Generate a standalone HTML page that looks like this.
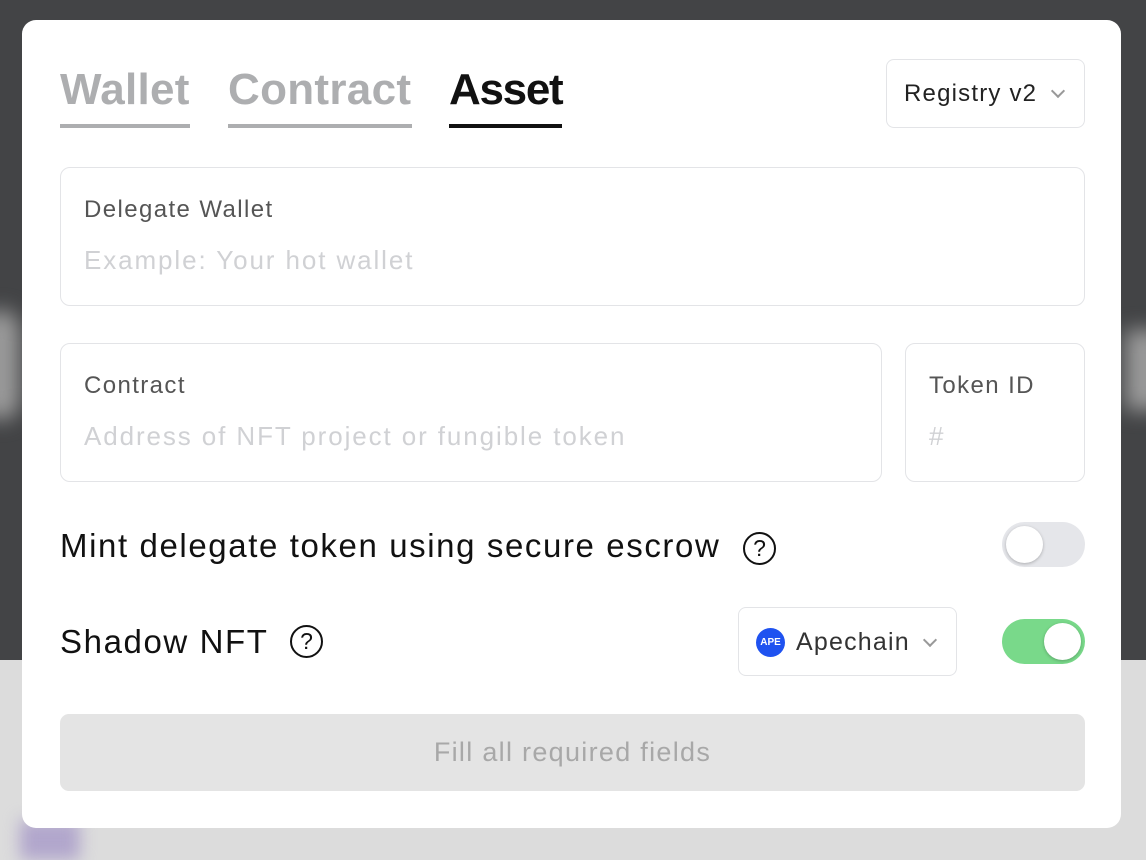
<!DOCTYPE html>
<html><head><meta charset="utf-8"><style>
*{box-sizing:border-box;margin:0;padding:0}
body{width:1146px;height:852px;overflow:hidden;position:relative;font-family:"Liberation Sans",sans-serif;background:#dcdcdc}
.bgtop{position:absolute;left:0;top:0;width:1146px;height:660px;background:#434446}
.blur1{position:absolute;left:-20px;top:310px;width:40px;height:110px;background:#9a9a9a;filter:blur(10px);border-radius:20px}
.blur2{position:absolute;left:1125px;top:330px;width:40px;height:80px;background:#9a9a9a;filter:blur(10px)}
.purple{position:absolute;left:20px;top:820px;width:60px;height:40px;background:#b1a6cc;filter:blur(8px)}
.card{position:absolute;left:22px;top:20px;width:1099px;height:808px;background:#fff;border-radius:14px}
.tab{position:absolute;top:45px;font-size:44px;font-weight:bold;color:#adaeb0;letter-spacing:0.3px}
.tabline{position:absolute;top:104px;height:4px;background:#adaeb0}
.sel{position:absolute;left:864px;top:39px;width:199px;height:69px;border:1.5px solid #e3e4e7;border-radius:8px;font-size:24px;color:#222;padding:20px 0 0 17px;letter-spacing:1.2px}
.chev{position:absolute;width:10px;height:10px;border-right:2px solid #999;border-bottom:2px solid #999;transform:rotate(45deg)}
.field{position:absolute;border:1.5px solid #e3e4e7;border-radius:10px}
.lab{position:absolute;left:23px;top:28px;font-size:24px;color:#555;letter-spacing:1.4px}
.ph{position:absolute;left:23px;top:77px;font-size:26px;color:#d0d1d4;letter-spacing:1.9px}
.row{position:absolute;font-size:33px;color:#111;letter-spacing:1.6px}
.q{position:absolute;width:33px;height:33px;border:2.3px solid #111;border-radius:50%;font-size:23px;text-align:center;line-height:29px;color:#111}
.tog{position:absolute;width:83px;height:45px;border-radius:23px}
.knob{position:absolute;top:4px;width:37px;height:37px;border-radius:50%;background:#fff;box-shadow:0 1px 3px rgba(0,0,0,.25)}
.btn{position:absolute;left:38px;top:694px;width:1025px;height:77px;background:#e4e4e4;border-radius:9px;text-align:center;line-height:77px;font-size:27px;color:#a8a8a8;letter-spacing:1.3px}
</style></head><body>
<div class="bgtop"></div><div class="blur1"></div><div class="blur2"></div><div class="purple"></div>
<div class="card">
 <div class="tab" style="left:38px">Wallet</div><div class="tabline" style="left:38px;width:130px"></div>
 <div class="tab" style="left:206px">Contract</div><div class="tabline" style="left:206px;width:184px"></div>
 <div class="tab" style="left:427px;color:#111;letter-spacing:-1.3px">Asset</div><div class="tabline" style="left:427px;width:113px;background:#111"></div>
 <div class="sel">Registry v2<div class="chev" style="left:166px;top:26px"></div></div>
 <div class="field" style="left:38px;top:147px;width:1025px;height:139px"><div class="lab">Delegate Wallet</div><div class="ph">Example: Your hot wallet</div></div>
 <div class="field" style="left:38px;top:323px;width:822px;height:139px"><div class="lab">Contract</div><div class="ph">Address of NFT project or fungible token</div></div>
 <div class="field" style="left:883px;top:323px;width:180px;height:139px"><div class="lab">Token ID</div><div class="ph">#</div></div>
 <div class="row" style="left:38px;top:507px">Mint delegate token using secure escrow</div>
 <div class="q" style="left:721px;top:512px">?</div>
 <div class="tog" style="left:980px;top:502px;background:#e5e6ea"><div class="knob" style="left:4px"></div></div>
 <div class="row" style="left:38px;top:603px">Shadow NFT</div>
 <div class="q" style="left:268px;top:605px">?</div>
 <div class="field" style="left:716px;top:587px;width:219px;height:69px;border-radius:8px">
  <div style="position:absolute;left:17px;top:20px;width:29px;height:29px;border-radius:50%;background:#1f52f0;color:#fff;font-size:10px;font-weight:bold;text-align:center;line-height:29px">APE</div>
  <div style="position:absolute;left:57px;top:20px;font-size:25px;color:#333;letter-spacing:1.2px">Apechain</div>
  <div class="chev" style="left:186px;top:27px"></div>
 </div>
 <div class="tog" style="left:980px;top:599px;background:#79d98a"><div class="knob" style="left:42px"></div></div>
 <div class="btn">Fill all required fields</div>
</div>
</body></html>
